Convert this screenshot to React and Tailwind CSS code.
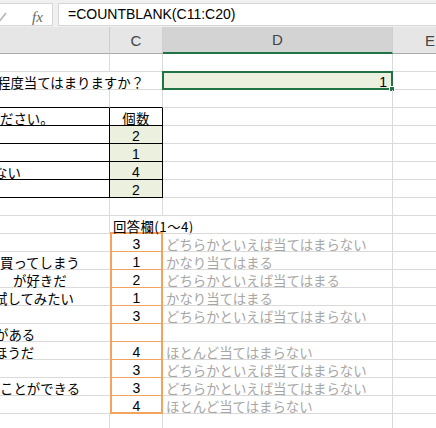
import React from "react";

const rows = [
  {},
  {
    b: "程度当てはまりますか？",
    bPos: "left-[-3px]",
    bCls: "border-b border-b-[#dadada]",
    sel: true,
    d: "1",
  },
  {
    bCls: "border-r border-b border-r-[#dadada] border-b-black",
    cCls: "border-r border-b border-r-[#dadada] border-b-black",
  },
  {
    b: "ださい。",
    bPos: "left-[0px]",
    bCls: "border-r border-b border-black",
    c: "個数",
    cJp: true,
    cCls: "border-r border-b border-black bg-white",
  },
  { c: "2", bCls: "border-r border-b border-black", cCls: "border-r border-b border-black bg-[#ebf1de]" },
  { c: "1", bCls: "border-r border-b border-black", cCls: "border-r border-b border-black bg-[#ebf1de]" },
  { b: "ない", bPos: "left-[-6px]", c: "4", bCls: "border-r border-b border-black", cCls: "border-r border-b border-black bg-[#ebf1de]" },
  { c: "2", bCls: "border-r border-b border-black", cCls: "border-r border-b border-black bg-[#ebf1de]" },
  {},
  {
    c: "回答欄(1～4)",
    cJp: true,
    cLeft: true,
    cCls: "border-b-2 border-b-[#f2a35e]",
  },
  { c: "3", d: "どちらかといえば当てはまらない", o: 1 },
  { b: "買ってしまう", bPos: "left-[0px]", c: "1", d: "かなり当てはまる", o: 1 },
  { b: "が好きだ", bPos: "left-[13px]", c: "2", d: "どちらかといえば当てはまる", o: 1 },
  { b: "試してみたい", bPos: "left-[-6px]", c: "1", d: "かなり当てはまる", o: 1 },
  { c: "3", d: "どちらかといえば当てはまらない", o: 1 },
  { b: "がある", bPos: "left-[-5px]", c: "", d: "", o: 1 },
  { b: "ほうだ", bPos: "left-[-6px]", c: "4", d: "ほとんど当てはまらない", o: 1 },
  { c: "3", d: "どちらかといえば当てはまらない", o: 1 },
  { b: "ことができる", bPos: "left-[0px]", c: "3", d: "どちらかといえば当てはまらない", o: 1 },
  { c: "4", d: "ほとんど当てはまらない", o: 2 },
  {},
];

const JP = "font-['Noto_Sans_CJK_JP','Noto_Sans_CJK_SC',sans-serif] text-[13.4px]";
const NUM = "font-['Liberation_Sans',Arial,sans-serif] text-[14px]";

function Row({ r }) {
  const bCls =
    r.bCls ||
    (r.o ? "border-b border-b-[#dadada]" : "border-r border-b border-r-[#dadada] border-b-[#dadada]");
  let cCls = r.cCls || "border-r border-b border-r-[#dadada] border-b-[#dadada]";
  if (r.o === 1) cCls = "border-l-2 border-r-2 border-b border-[#f2a35e]";
  if (r.o === 2) cCls = "border-l-2 border-r-2 border-b-2 border-[#f2a35e]";
  return (
    <div className="flex h-[18px] leading-[18px]">
      <div className={"relative w-[110px] shrink-0 " + bCls}>
        {r.b && (
          <span className={"absolute top-[1px] whitespace-nowrap text-black " + JP + " " + r.bPos}>{r.b}</span>
        )}
      </div>
      <div
        className={
          "relative flex w-[53px] shrink-0 " +
          (r.cLeft ? "justify-start pl-[3px] " : "justify-center ") +
          cCls
        }
      >
        {r.c && (
          <span
            className={
              "whitespace-nowrap text-black pt-[1px] " + (r.cJp ? JP + " tracking-[0.4px]" : NUM)
            }
          >
            {r.c}
          </span>
        )}
      </div>
      <div
        className={
          "relative w-[230px] shrink-0 border-r border-b border-r-[#dadada] border-b-[#dadada] " +
          (r.sel ? "bg-[#ebf1de]" : "")
        }
      >
        {r.sel ? (
          <>
            <span className={"absolute right-[5px] top-0 pt-[1px] text-black " + NUM}>{r.d}</span>
            <div className="absolute left-[-1px] right-[-1px] top-[-1px] bottom-[-1px] border-2 border-[#217346]">
              <div className="absolute right-[-4px] bottom-[-4px] h-[6px] w-[6px] bg-[#217346] border border-white" />
            </div>
          </>
        ) : (
          r.d && (
            <span className={"absolute left-[3px] top-[1px] whitespace-nowrap text-[#a6a6a6] " + JP}>{r.d}</span>
          )
        )}
      </div>
      <div className="w-[43px] shrink-0 border-b border-b-[#dadada]" />
    </div>
  );
}

export default function App() {
  return (
    <div className="relative h-[428px] w-[436px] overflow-hidden bg-white font-['Liberation_Sans','Noto_Sans_CJK_JP',sans-serif]">
      {/* formula bar */}
      <div className="flex h-[27px] bg-[#f0f0f0] pt-[3px] pb-[1px]">
        <div className="relative flex w-[53px] shrink-0 items-center border-y border-r border-[#d6d6d6] bg-white">
          <svg className="absolute left-0 top-[8px]" width="8" height="12" viewBox="0 0 8 12">
            <path d="M-2 11 L6 1" stroke="#b4b4b4" strokeWidth="1.6" fill="none" />
          </svg>
          <span className="absolute left-[32px] top-[2px] font-['Liberation_Serif',serif] text-[15px] italic text-[#666]">
            fx
          </span>
        </div>
        <div className="w-[5px] shrink-0" />
        <div className="flex flex-1 items-center border-y border-l border-[#d6d6d6] bg-white pl-[9px]">
          <span className="font-['Liberation_Sans',Arial,sans-serif] text-[14px] text-black">
            =COUNTBLANK(C11:C20)
          </span>
        </div>
      </div>
      {/* column headers */}
      <div className="flex h-[27px] bg-[#e6e6e6] font-['Liberation_Sans',Arial,sans-serif] text-[15px] text-[#444]">
        <div className="w-[110px] shrink-0 border-r border-b border-r-[#cfcfcf] border-b-[#ababab]" />
        <div className="flex w-[53px] shrink-0 items-center justify-center border-r border-b border-r-[#cfcfcf] border-b-[#ababab] pt-[2px]">
          C
        </div>
        <div className="flex w-[230px] shrink-0 items-center justify-center border-r border-b-2 border-r-[#cfcfcf] border-b-[#217346] bg-[#d3d3d3] pt-[2px]">
          D
        </div>
        <div className="flex w-[43px] shrink-0 items-center border-b border-b-[#ababab] pl-[32px] pt-[2px]">
          E
        </div>
      </div>
      {rows.map((r, i) => (
        <Row key={i} r={r} />
      ))}
    </div>
  );
}
